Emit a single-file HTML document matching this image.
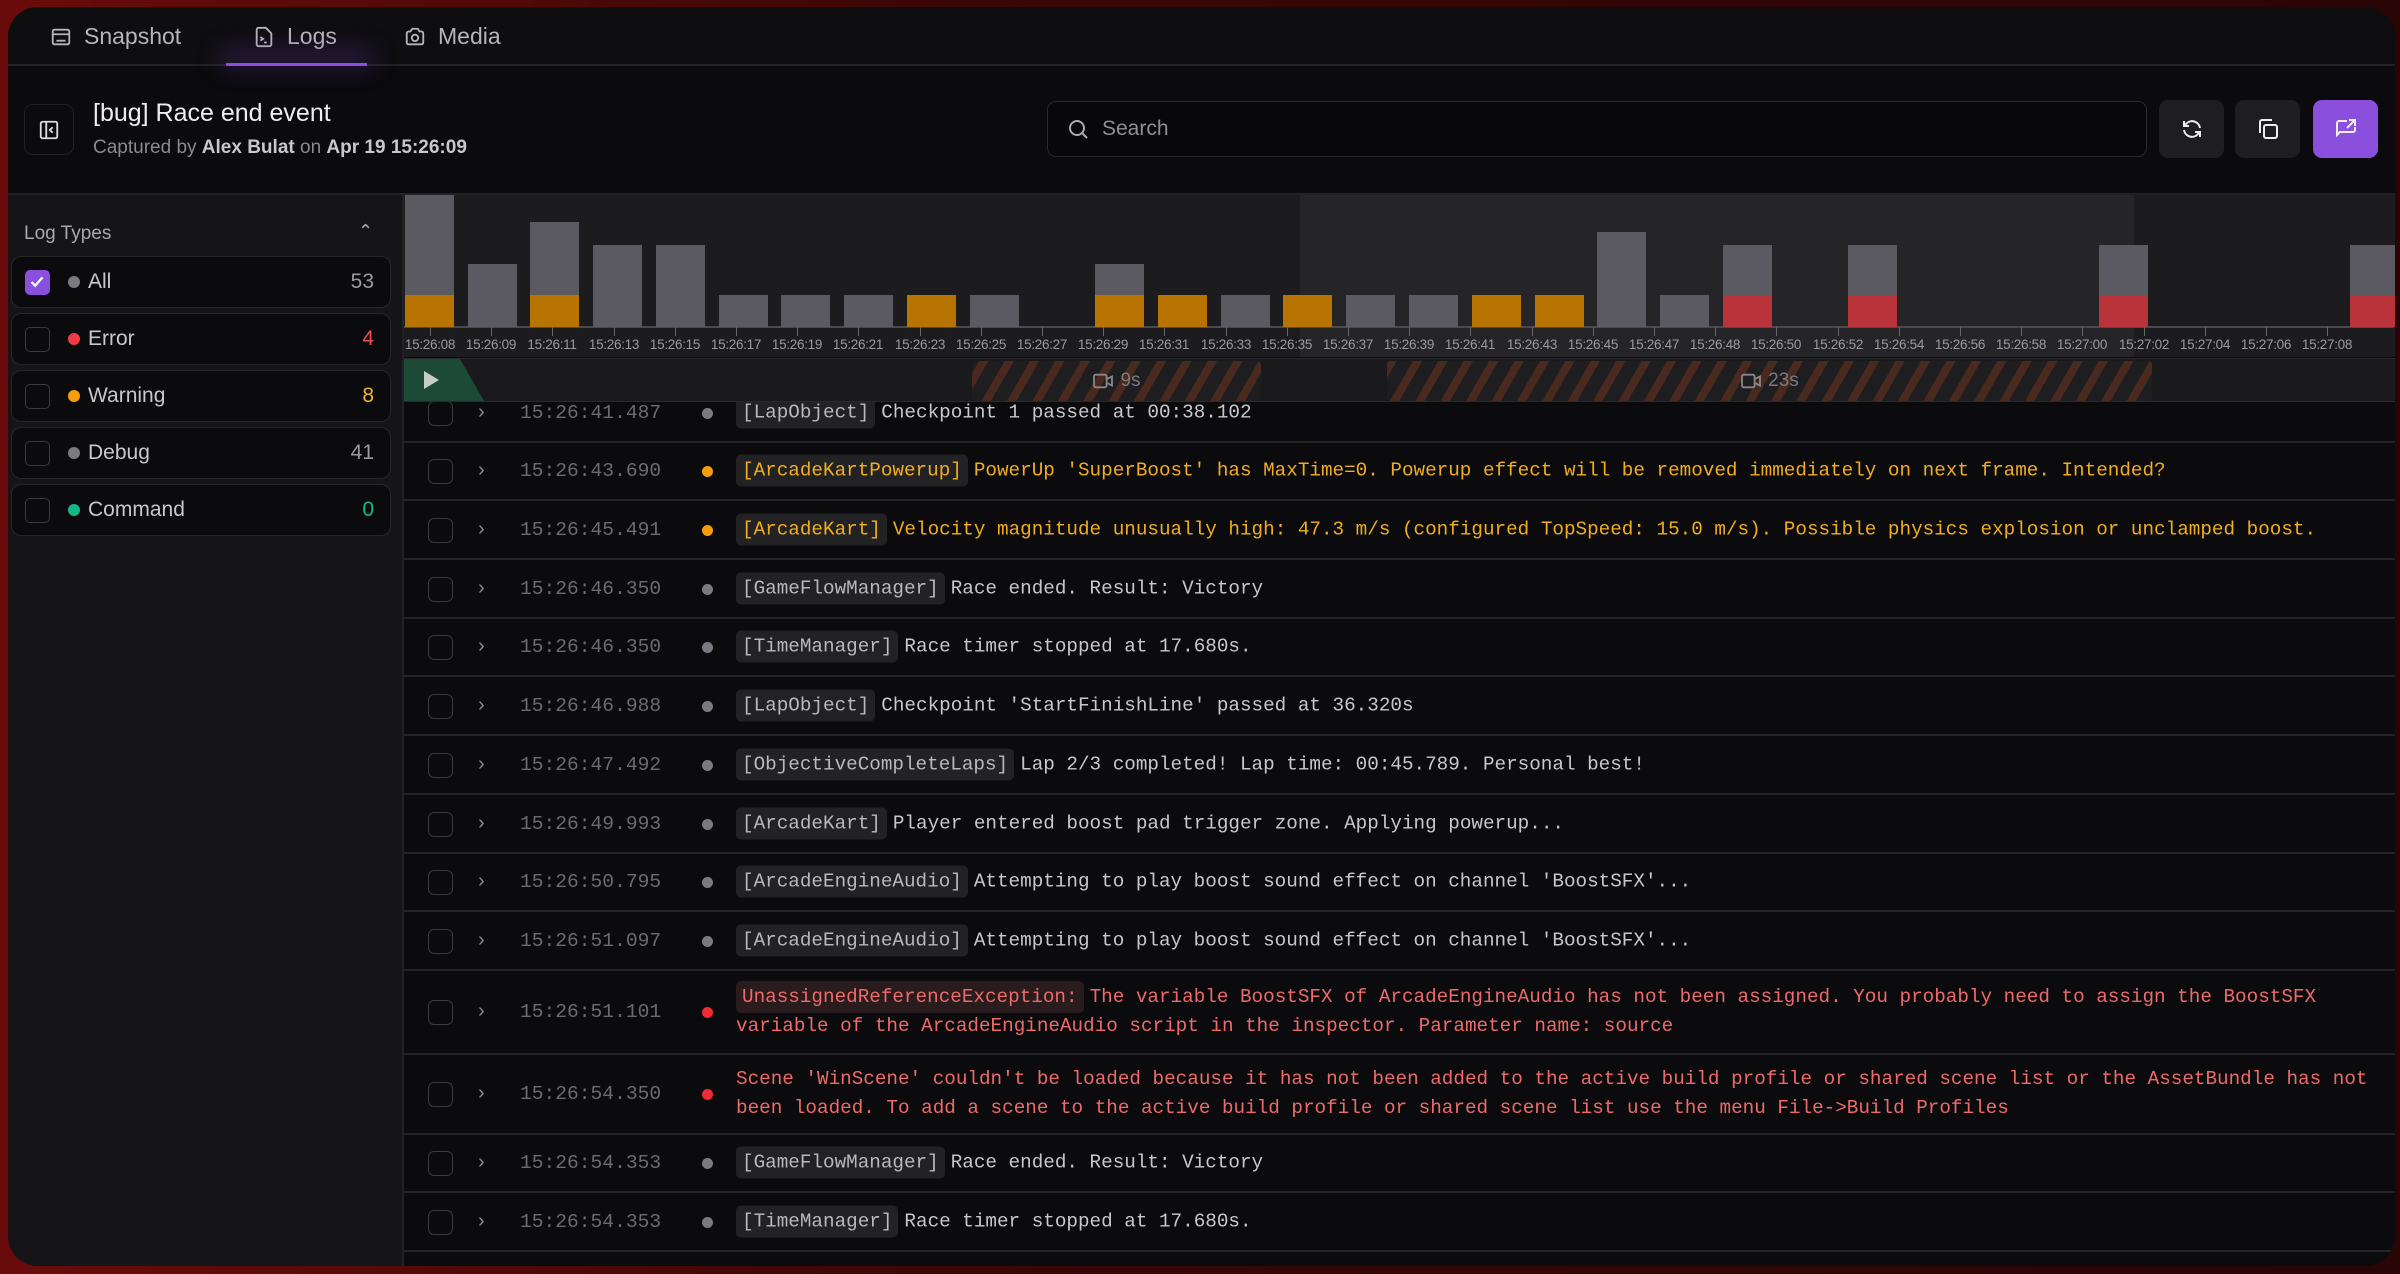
<!DOCTYPE html>
<html><head><meta charset="utf-8">
<style>
*{box-sizing:border-box;margin:0;padding:0}
body{width:2400px;height:1274px;overflow:hidden;background:linear-gradient(90deg,#6a0b0b,#3a0606 40%,#2a0506);font-family:"Liberation Sans",sans-serif;position:relative}
.win{position:absolute;left:8px;top:7px;width:2387px;height:1259px;background:#0b0b0d;border-radius:30px;overflow:hidden}
.abs{position:absolute}
.tabs{left:0;top:0;width:100%;height:59px;background:#0e0e10;border-bottom:2px solid #222226}
.tab{position:absolute;top:0;height:59px;display:flex;align-items:center;gap:12px;color:#b5b5ba;font-size:23px}
.tab svg{width:22px;height:22px}
.ul{left:218px;top:56px;width:141px;height:3px;background:#8a4fe0;box-shadow:0 -6px 24px 6px rgba(120,60,200,.35)}
.collapse{left:16px;top:97px;width:50px;height:51px;border:1.5px solid #222226;border-radius:9px;display:flex;align-items:center;justify-content:center}
.title{left:85px;top:92px;color:#eee;font-size:25px}
.sub{left:85px;top:130px;color:#8a8a90;font-size:19px}
.sub b{color:#c8c8cc;font-weight:bold}
.search{left:1039px;top:94px;width:1100px;height:56px;border:1.5px solid #2a2a2e;border-radius:9px;background:#08080a;display:flex;align-items:center;padding-left:18px;gap:12px;color:#8f8f95;font-size:21px}
.btn{top:93px;width:65px;height:58px;border-radius:9px;background:#1e1e21;display:flex;align-items:center;justify-content:center}
.side{left:0;top:186px;width:396px;height:1100px;background:#151517;border-right:2px solid #222226;border-top:2px solid #222226}
.lt{left:16px;top:28px;color:#a8a8ae;font-size:19px}
.item{position:absolute;left:3px;width:380px;height:52px;background:#0b0b0d;border:1.5px solid #27272b;border-radius:10px;display:flex;align-items:center;font-size:21px;color:#c8c8cc}
.cb{position:absolute;left:13px;width:25px;height:25px;border:1.5px solid #3a3a3e;border-radius:5px}
.dt{position:absolute;left:56px;width:12px;height:12px;border-radius:50%}
.lbl{position:absolute;left:76px}
.cnt{position:absolute;right:16px}
.chart{left:396px;top:186px;width:2000px;height:164px;background:#1c1c1f;border-top:2px solid #222226}
.bar{position:absolute;width:49px;background:#5a5a60}
.lab{position:absolute;top:330px;width:70px;margin-left:-35px;text-align:center;font-size:13.5px;color:#9a9aa0;letter-spacing:-.3px}
.tick{position:absolute;top:320px;width:1px;height:9px;background:#666}
.strip{left:396px;top:351px;width:2000px;height:44px;background:#1a1a1c;border-top:1px solid #2a2a2e;border-bottom:1px solid #2a2a2e}
.stripe{position:absolute;top:2px;height:40px;border-radius:4px;background:repeating-linear-gradient(-60deg,#1e1e20 0 14px,#4a2a1e 14px 22px);display:flex;align-items:center;justify-content:center;gap:6px;color:#7a7a80;font-size:19px}
.row{position:absolute;left:396px;width:2000px;border-bottom:2px solid #242428;font-family:"Liberation Mono",monospace;font-size:19.3px;color:#c8c8cc}
.row .c{position:absolute;left:24px;width:25px;height:25px;border:1.5px solid #3a3a3e;border-radius:6px;top:50%;margin-top:-12px}
.row .ch{position:absolute;left:74px;top:50%;margin-top:-12px;color:#8a8a90;font-family:"Liberation Sans",sans-serif;font-size:20px}
.row .ts{position:absolute;left:116px;top:50%;margin-top:-11px;color:#6b6b70;font-size:19.6px}
.row .d{position:absolute;left:298px;width:11px;height:11px;border-radius:50%;top:50%;margin-top:-5px;background:#7a7a80}
.row .m{position:absolute;left:332px;right:20px;top:50%;transform:translateY(-50%);line-height:29px;white-space:nowrap}
.tag{background:#222225;border-radius:5px;padding:5px 6px;color:#b8b8bd;margin-right:6px}
.w{color:#f2ad1d}.w .tag{color:#f2ad1d}
.e{color:#ee6a6a}.e .tag{color:#ee6a6a;background:#2a1b1d}
</style></head><body>
<div class="win">
 <div class="abs tabs"></div>
 <div class="tab" style="left:42px"><svg viewBox="0 0 24 24" fill="none" stroke="#b5b5ba" stroke-width="2"><rect x="3" y="4" width="18" height="16" rx="2"/><path d="M3 9h18M7 16h10"/></svg>Snapshot</div>
 <div class="tab" style="left:245px"><svg viewBox="0 0 24 24" fill="none" stroke="#b5b5ba" stroke-width="2"><path d="M14 2H6a2 2 0 0 0-2 2v16a2 2 0 0 0 2 2h12a2 2 0 0 0 2-2V8z"/><path d="M8 12l3 2-3 2M12 18h3"/></svg>Logs</div>
 <div class="tab" style="left:396px"><svg viewBox="0 0 24 24" fill="none" stroke="#b5b5ba" stroke-width="2"><path d="M3 8a2 2 0 0 1 2-2h2l2-3h6l2 3h2a2 2 0 0 1 2 2v10a2 2 0 0 1-2 2H5a2 2 0 0 1-2-2z"/><circle cx="12" cy="13" r="3.5"/></svg>Media</div>
 <div class="abs ul"></div>

 <div class="abs collapse"><svg width="22" height="22" viewBox="0 0 24 24" fill="none" stroke="#ddd" stroke-width="2"><rect x="3" y="3" width="18" height="18" rx="2"/><path d="M9 3v18M16 9l-3 3 3 3"/></svg></div>
 <div class="abs title">[bug] Race end event</div>
 <div class="abs sub">Captured by <b>Alex Bulat</b> on <b>Apr 19 15:26:09</b></div>
 <div class="abs search"><svg width="24" height="24" viewBox="0 0 24 24" fill="none" stroke="#aaa" stroke-width="2"><circle cx="11" cy="11" r="7"/><path d="M16 16l5 5"/></svg>Search</div>
 <div class="abs btn" style="left:2151px"><svg width="24" height="24" viewBox="0 0 24 24" fill="none" stroke="#eee" stroke-width="2"><path d="M20 11a8 8 0 0 0-14-4l-2 2M4 4v5h5M4 13a8 8 0 0 0 14 4l2-2M20 20v-5h-5"/></svg></div>
 <div class="abs btn" style="left:2227px"><svg width="24" height="24" viewBox="0 0 24 24" fill="none" stroke="#eee" stroke-width="2"><rect x="8" y="8" width="13" height="13" rx="2"/><path d="M4 16V5a2 2 0 0 1 2-2h10"/></svg></div>
 <div class="abs btn" style="left:2305px;background:#8a4fdc"><svg width="24" height="24" viewBox="0 0 24 24" fill="none" stroke="#eee" stroke-width="2"><path d="M13 4H5a2 2 0 0 0-2 2v12l3-3h13a2 2 0 0 0 2-2v-3M15 3h6v6M21 3l-8 8"/></svg></div>

 <div class="abs side">
  <div class="abs lt">Log Types</div>
  <div class="abs" style="left:350px;top:26px;color:#aaa;font-size:18px">&#8963;</div>
  <div class="item" style="top:61px"><div class="cb" style="background:#8a4fdc;border-color:#8a4fdc"><svg width="22" height="22" viewBox="0 0 24 24" fill="none" stroke="#fff" stroke-width="2.5"><path d="M6 12l4 4 8-9"/></svg></div><div class="dt" style="background:#7a7a80"></div><div class="lbl">All</div><div class="cnt" style="color:#9a9aa0">53</div></div>
  <div class="item" style="top:118px"><div class="cb"></div><div class="dt" style="background:#ee3b47"></div><div class="lbl">Error</div><div class="cnt" style="color:#ee4b55">4</div></div>
  <div class="item" style="top:175px"><div class="cb"></div><div class="dt" style="background:#f59e0b"></div><div class="lbl">Warning</div><div class="cnt" style="color:#f5b324">8</div></div>
  <div class="item" style="top:232px"><div class="cb"></div><div class="dt" style="background:#7a7a80"></div><div class="lbl">Debug</div><div class="cnt" style="color:#9a9aa0">41</div></div>
  <div class="item" style="top:289px"><div class="cb"></div><div class="dt" style="background:#14b886"></div><div class="lbl">Command</div><div class="cnt" style="color:#14b886">0</div></div>
 </div>

 <div class="abs chart"></div>
 <div class="abs" style="left:1292px;top:188px;width:834px;height:162px;background:#252528"></div>
 <div class="abs" style="left:396px;top:319px;width:1990px;height:2px;background:#4a4a4e"></div>
 <div class="bar" style="left:397px;top:188px;height:132px"></div><div class="bar" style="left:397px;top:288px;height:32px;background:#b87400"></div>
 <div class="bar" style="left:460px;top:257px;height:63px"></div>
 <div class="bar" style="left:522px;top:215px;height:105px"></div><div class="bar" style="left:522px;top:288px;height:32px;background:#b87400"></div>
 <div class="bar" style="left:585px;top:238px;height:82px"></div>
 <div class="bar" style="left:648px;top:238px;height:82px"></div>
 <div class="bar" style="left:711px;top:288px;height:32px"></div>
 <div class="bar" style="left:773px;top:288px;height:32px"></div>
 <div class="bar" style="left:836px;top:288px;height:32px"></div>
 <div class="bar" style="left:899px;top:288px;height:32px;background:#b87400"></div>
 <div class="bar" style="left:962px;top:288px;height:32px"></div>
 <div class="bar" style="left:1087px;top:257px;height:63px"></div><div class="bar" style="left:1087px;top:288px;height:32px;background:#b87400"></div>
 <div class="bar" style="left:1150px;top:288px;height:32px;background:#b87400"></div>
 <div class="bar" style="left:1213px;top:288px;height:32px"></div>
 <div class="bar" style="left:1275px;top:288px;height:32px;background:#b87400"></div>
 <div class="bar" style="left:1338px;top:288px;height:32px"></div>
 <div class="bar" style="left:1401px;top:288px;height:32px"></div>
 <div class="bar" style="left:1464px;top:288px;height:32px;background:#b87400"></div>
 <div class="bar" style="left:1527px;top:288px;height:32px;background:#b87400"></div>
 <div class="bar" style="left:1589px;top:225px;height:95px"></div>
 <div class="bar" style="left:1652px;top:288px;height:32px"></div>
 <div class="bar" style="left:1715px;top:238px;height:82px"></div><div class="bar" style="left:1715px;top:288px;height:32px;background:#b8333a"></div>
 <div class="bar" style="left:1840px;top:238px;height:82px"></div><div class="bar" style="left:1840px;top:288px;height:32px;background:#b8333a"></div>
 <div class="bar" style="left:2091px;top:238px;height:82px"></div><div class="bar" style="left:2091px;top:288px;height:32px;background:#b8333a"></div>
 <div class="bar" style="left:2342px;top:238px;height:82px"></div><div class="bar" style="left:2342px;top:288px;height:32px;background:#b8333a"></div>

 <div class="tick" style="left:422px"></div><div class="lab" style="left:422px">15:26:08</div>
 <div class="tick" style="left:483px"></div><div class="lab" style="left:483px">15:26:09</div>
 <div class="tick" style="left:544px"></div><div class="lab" style="left:544px">15:26:11</div>
 <div class="tick" style="left:606px"></div><div class="lab" style="left:606px">15:26:13</div>
 <div class="tick" style="left:667px"></div><div class="lab" style="left:667px">15:26:15</div>
 <div class="tick" style="left:728px"></div><div class="lab" style="left:728px">15:26:17</div>
 <div class="tick" style="left:789px"></div><div class="lab" style="left:789px">15:26:19</div>
 <div class="tick" style="left:850px"></div><div class="lab" style="left:850px">15:26:21</div>
 <div class="tick" style="left:912px"></div><div class="lab" style="left:912px">15:26:23</div>
 <div class="tick" style="left:973px"></div><div class="lab" style="left:973px">15:26:25</div>
 <div class="tick" style="left:1034px"></div><div class="lab" style="left:1034px">15:26:27</div>
 <div class="tick" style="left:1095px"></div><div class="lab" style="left:1095px">15:26:29</div>
 <div class="tick" style="left:1156px"></div><div class="lab" style="left:1156px">15:26:31</div>
 <div class="tick" style="left:1218px"></div><div class="lab" style="left:1218px">15:26:33</div>
 <div class="tick" style="left:1279px"></div><div class="lab" style="left:1279px">15:26:35</div>
 <div class="tick" style="left:1340px"></div><div class="lab" style="left:1340px">15:26:37</div>
 <div class="tick" style="left:1401px"></div><div class="lab" style="left:1401px">15:26:39</div>
 <div class="tick" style="left:1462px"></div><div class="lab" style="left:1462px">15:26:41</div>
 <div class="tick" style="left:1524px"></div><div class="lab" style="left:1524px">15:26:43</div>
 <div class="tick" style="left:1585px"></div><div class="lab" style="left:1585px">15:26:45</div>
 <div class="tick" style="left:1646px"></div><div class="lab" style="left:1646px">15:26:47</div>
 <div class="tick" style="left:1707px"></div><div class="lab" style="left:1707px">15:26:48</div>
 <div class="tick" style="left:1768px"></div><div class="lab" style="left:1768px">15:26:50</div>
 <div class="tick" style="left:1830px"></div><div class="lab" style="left:1830px">15:26:52</div>
 <div class="tick" style="left:1891px"></div><div class="lab" style="left:1891px">15:26:54</div>
 <div class="tick" style="left:1952px"></div><div class="lab" style="left:1952px">15:26:56</div>
 <div class="tick" style="left:2013px"></div><div class="lab" style="left:2013px">15:26:58</div>
 <div class="tick" style="left:2074px"></div><div class="lab" style="left:2074px">15:27:00</div>
 <div class="tick" style="left:2136px"></div><div class="lab" style="left:2136px">15:27:02</div>
 <div class="tick" style="left:2197px"></div><div class="lab" style="left:2197px">15:27:04</div>
 <div class="tick" style="left:2258px"></div><div class="lab" style="left:2258px">15:27:06</div>
 <div class="tick" style="left:2319px"></div><div class="lab" style="left:2319px">15:27:08</div>

 <div class="row" style="top:377px;height:59px"><div class="c"></div><div class="ch">&#8250;</div><div class="ts">15:26:41.487</div><div class="d"></div><div class="m"><span class="tag">[LapObject]</span>Checkpoint 1 passed at 00:38.102</div></div>
 <div class="row w" style="top:436px;height:58px"><div class="c"></div><div class="ch">&#8250;</div><div class="ts">15:26:43.690</div><div class="d" style="background:#f59e0b"></div><div class="m"><span class="tag">[ArcadeKartPowerup]</span>PowerUp 'SuperBoost' has MaxTime=0. Powerup effect will be removed immediately on next frame. Intended?</div></div>
 <div class="row w" style="top:494px;height:59px"><div class="c"></div><div class="ch">&#8250;</div><div class="ts">15:26:45.491</div><div class="d" style="background:#f59e0b"></div><div class="m"><span class="tag">[ArcadeKart]</span>Velocity magnitude unusually high: 47.3 m/s (configured TopSpeed: 15.0 m/s). Possible physics explosion or unclamped boost.</div></div>
 <div class="row" style="top:553px;height:59px"><div class="c"></div><div class="ch">&#8250;</div><div class="ts">15:26:46.350</div><div class="d"></div><div class="m"><span class="tag">[GameFlowManager]</span>Race ended. Result: Victory</div></div>
 <div class="row" style="top:612px;height:58px"><div class="c"></div><div class="ch">&#8250;</div><div class="ts">15:26:46.350</div><div class="d"></div><div class="m"><span class="tag">[TimeManager]</span>Race timer stopped at 17.680s.</div></div>
 <div class="row" style="top:670px;height:59px"><div class="c"></div><div class="ch">&#8250;</div><div class="ts">15:26:46.988</div><div class="d"></div><div class="m"><span class="tag">[LapObject]</span>Checkpoint 'StartFinishLine' passed at 36.320s</div></div>
 <div class="row" style="top:729px;height:59px"><div class="c"></div><div class="ch">&#8250;</div><div class="ts">15:26:47.492</div><div class="d"></div><div class="m"><span class="tag">[ObjectiveCompleteLaps]</span>Lap 2/3 completed! Lap time: 00:45.789. Personal best!</div></div>
 <div class="row" style="top:788px;height:59px"><div class="c"></div><div class="ch">&#8250;</div><div class="ts">15:26:49.993</div><div class="d"></div><div class="m"><span class="tag">[ArcadeKart]</span>Player entered boost pad trigger zone. Applying powerup...</div></div>
 <div class="row" style="top:847px;height:58px"><div class="c"></div><div class="ch">&#8250;</div><div class="ts">15:26:50.795</div><div class="d"></div><div class="m"><span class="tag">[ArcadeEngineAudio]</span>Attempting to play boost sound effect on channel 'BoostSFX'...</div></div>
 <div class="row" style="top:905px;height:59px"><div class="c"></div><div class="ch">&#8250;</div><div class="ts">15:26:51.097</div><div class="d"></div><div class="m"><span class="tag">[ArcadeEngineAudio]</span>Attempting to play boost sound effect on channel 'BoostSFX'...</div></div>
 <div class="row e" style="top:964px;height:84px"><div class="c"></div><div class="ch">&#8250;</div><div class="ts">15:26:51.101</div><div class="d" style="background:#ee2b37"></div><div class="m"><span class="tag">UnassignedReferenceException:</span>The variable BoostSFX of ArcadeEngineAudio has not been assigned. You probably need to assign the BoostSFX<br>variable of the ArcadeEngineAudio script in the inspector. Parameter name: source</div></div>
 <div class="row e" style="top:1048px;height:80px"><div class="c"></div><div class="ch">&#8250;</div><div class="ts">15:26:54.350</div><div class="d" style="background:#ee2b37"></div><div class="m">Scene 'WinScene' couldn't be loaded because it has not been added to the active build profile or shared scene list or the AssetBundle has not<br>been loaded. To add a scene to the active build profile or shared scene list use the menu File-&gt;Build Profiles</div></div>
 <div class="row" style="top:1128px;height:58px"><div class="c"></div><div class="ch">&#8250;</div><div class="ts">15:26:54.353</div><div class="d"></div><div class="m"><span class="tag">[GameFlowManager]</span>Race ended. Result: Victory</div></div>
 <div class="row" style="top:1186px;height:59px"><div class="c"></div><div class="ch">&#8250;</div><div class="ts">15:26:54.353</div><div class="d"></div><div class="m"><span class="tag">[TimeManager]</span>Race timer stopped at 17.680s.</div></div>

 <div class="abs strip">
  <div class="abs" style="left:0;top:0;width:80px;height:42px;background:#1d4a36;clip-path:polygon(0 0,56px 0,80px 42px,0 42px)"></div>
  <div class="abs" style="left:20px;top:12px;width:0;height:0;border-left:15px solid #c8ccca;border-top:9px solid transparent;border-bottom:9px solid transparent"></div>
  <div class="stripe" style="left:568px;width:289px"><svg width="22" height="18" viewBox="0 0 24 20" fill="none" stroke="#888" stroke-width="2"><rect x="2" y="3" width="14" height="14" rx="2"/><path d="M16 8l6-3v10l-6-3"/></svg>9s</div>
  <div class="stripe" style="left:983px;width:765px"><svg width="22" height="18" viewBox="0 0 24 20" fill="none" stroke="#888" stroke-width="2"><rect x="2" y="3" width="14" height="14" rx="2"/><path d="M16 8l6-3v10l-6-3"/></svg>23s</div>
 </div>
</div>
</body></html>
